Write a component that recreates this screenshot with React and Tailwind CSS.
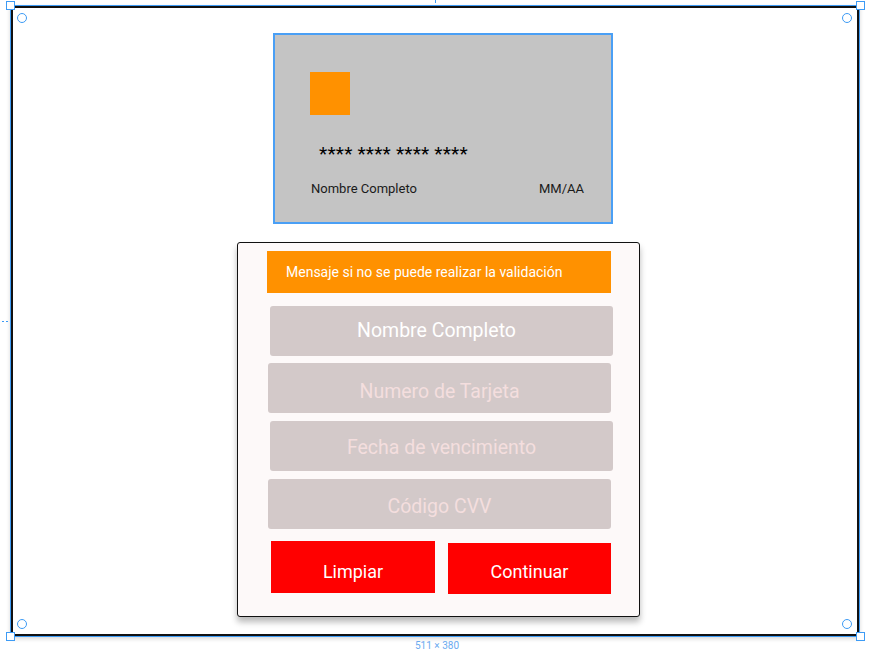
import React from "react";

function Handle({ className }) {
  return <div className={"absolute w-[9px] h-[9px] bg-white border-[1.5px] border-[#3d9bf5] " + className} />;
}
function Dot({ className }) {
  return <div className={"absolute w-[10px] h-[10px] rounded-full border-[1.5px] border-[#3d9bf5] " + className} />;
}

export default function App() {
  return (
    <div className="relative w-[874px] h-[652px] bg-white overflow-hidden font-['Roboto',sans-serif]">
      <div className="pt-[5px] pl-[10px]">
        <div className="w-[850px] h-[632px] border border-[#3d9bf5] shadow-[0_2px_4px_rgba(0,0,0,0.15)]">
          <div className="w-full h-full border-2 border-[#111] flex flex-col items-start">
            {/* Card */}
            <div className="ml-[260px] mt-[25px] w-[340px] h-[191px] border-2 border-[#4a9ff5] bg-[#c4c4c4] flex flex-col">
              <div className="ml-[35px] mt-[37px] w-[40px] h-[43px] bg-[#ff9100]" />
              <div className="ml-[44px] mt-[28px] text-[19px] leading-[22px] text-black tracking-[0.2px]">**** **** **** ****</div>
              <div className="mt-[15px] ml-[36px] mr-[27px] flex justify-between text-[13px] leading-[18px] text-[#1a1a1a]">
                <span>Nombre Completo</span>
                <span>MM/AA</span>
              </div>
            </div>
            {/* Form panel */}
            <div className="ml-[224px] mt-[18px] w-[403px] h-[375px] border-[1.5px] border-[#111] rounded-[3px] bg-[#fdf9f9] shadow-[0_5px_6px_rgba(0,0,0,0.28)] flex flex-col items-start">
              <div className="ml-[29px] mt-[8px] w-[344px] h-[42px] bg-[#ff9100] flex items-center pl-[19px] text-[14px] text-white">
                Mensaje si no se puede realizar la validación
              </div>
              <div className="ml-[32px] mt-[13px] w-[343px] h-[50px] rounded-[3px] bg-[#d3c9c9] flex items-center justify-center pr-[10px] text-[19.5px] text-white">
                Nombre Completo
              </div>
              <div className="ml-[30px] mt-[7px] w-[343px] h-[50px] rounded-[3px] bg-[#d3c9c9] flex items-center justify-center pt-[8px] text-[19.5px] text-[#f4dede]">
                Numero de Tarjeta
              </div>
              <div className="ml-[32px] mt-[8px] w-[343px] h-[50px] rounded-[3px] bg-[#d3c9c9] flex items-center justify-center pt-[4px] text-[19.5px] text-[#f4dede]">
                Fecha de vencimiento
              </div>
              <div className="ml-[30px] mt-[8px] w-[343px] h-[50px] rounded-[3px] bg-[#d3c9c9] flex items-center justify-center pt-[6px] text-[19.5px] text-[#f4dede]">
                Código CVV
              </div>
              <div className="mt-[12px] flex items-start">
                <div className="ml-[33px] w-[164px] h-[52px] bg-[#ff0000] flex items-center justify-center pt-[9px] text-[18px] text-white">
                  Limpiar
                </div>
                <div className="ml-[13px] mt-[2px] w-[163px] h-[51px] bg-[#ff0000] flex items-center justify-center pt-[6px] text-[18px] text-white">
                  Continuar
                </div>
              </div>
            </div>
          </div>
        </div>
      </div>

      {/* selection overlay */}
      <Handle className="left-[6px] top-[1px]" />
      <Handle className="left-[856px] top-[1px]" />
      <Handle className="left-[6px] top-[632px]" />
      <Handle className="left-[856px] top-[632px]" />
      <Dot className="left-[17px] top-[13px]" />
      <Dot className="left-[842px] top-[13px]" />
      <Dot className="left-[17px] top-[619px]" />
      <Dot className="left-[842px] top-[619px]" />
      <div className="absolute left-[435px] top-0 w-[1px] h-[3px] bg-[#3d9bf5]" />
      <div className="absolute left-[2px] top-[321px] w-[2px] h-[1px] bg-[#3d9bf5]" />
      <div className="absolute left-[6px] top-[321px] w-[2px] h-[1px] bg-[#3d9bf5]" />
      <div className="absolute left-0 w-[874px] top-[640px] text-center text-[10px] leading-[12px] text-[#6aaaf0]">
        511 × 380
      </div>
    </div>
  );
}
